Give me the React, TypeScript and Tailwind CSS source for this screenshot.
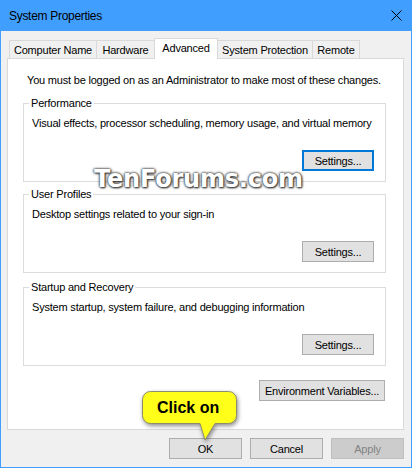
import React from "react";

function Btn({
  children,
  className = "",
}: {
  children: React.ReactNode;
  className?: string;
}) {
  return (
    <div
      className={
        "flex items-center justify-center border border-[#adadad] bg-[#e1e1e1] text-black " +
        className
      }
    >
      {children}
    </div>
  );
}

function Group({
  label,
  text,
  focused = false,
  className = "",
}: {
  label: string;
  text: string;
  focused?: boolean;
  className?: string;
}) {
  return (
    <div
      className={
        "relative ml-[15px] flex h-[79px] w-[363px] flex-col border border-[#dcdcdc] pl-[8px] pr-[11px] pt-[11px] " +
        className
      }
    >
      <div className="absolute -top-[9px] left-[5px] bg-white px-[2px] leading-[16px]">
        {label}
      </div>
      <div className="leading-[16px]">{text}</div>
      <div className="mt-[19px] flex justify-end">
        {focused ? (
          <div className="flex h-[21px] w-[72px] items-center justify-center border-2 border-[#0078d7] bg-[#e1e1e1]">
            Settings...
          </div>
        ) : (
          <Btn className="h-[21px] w-[72px]">Settings...</Btn>
        )}
      </div>
    </div>
  );
}

export default function App() {
  const tabBase =
    "-ml-px flex items-center justify-center border-x border-t border-[#d9d9d9]";
  return (
    <div className="relative flex h-[468px] w-[412px] flex-col border-x border-b border-[#409eff] bg-[#f0f0f0] font-['Liberation_Sans',Arial,sans-serif] text-[11px] leading-[16px] tracking-[-0.2px] text-black">
      {/* Title bar */}
      <div className="flex h-[31px] shrink-0 items-center justify-between bg-[#409eff] pl-[8px] pr-[9px]">
        <span className="text-[12px] tracking-[-0.3px]">System Properties</span>
        <svg width="11" height="11" viewBox="0 0 11 11">
          <path d="M0.5 0.5 L10.5 10.5 M10.5 0.5 L0.5 10.5" stroke="#000" strokeWidth="1" />
        </svg>
      </div>

      {/* Body */}
      <div className="flex flex-1 flex-col pl-[6px] pr-[7px] pt-[7px]">
        {/* Tabs */}
        <div className="flex h-[20px] items-end pl-[3px]">
          <div className={tabBase + " h-[18px] w-[88px] bg-[#f0f0f0]"}>Computer Name</div>
          <div className={tabBase + " h-[18px] w-[59px] bg-[#f0f0f0]"}>Hardware</div>
          <div
            className={
              tabBase + " relative z-10 -mb-px h-[21px] w-[64px] bg-white pb-[2px]"
            }
          >
            Advanced
          </div>
          <div className={tabBase + " h-[18px] w-[96px] bg-[#f0f0f0]"}>System Protection</div>
          <div className={tabBase + " h-[18px] w-[48px] bg-[#f0f0f0]"}>Remote</div>
        </div>

        {/* Panel */}
        <div className="flex h-[372px] flex-col border border-[#d9d9d9] bg-white pt-[13px]">
          <div className="pl-[19px] leading-[16px]">
            You must be logged on as an Administrator to make most of these changes.
          </div>
          <Group
            className="mt-[15px]"
            label="Performance"
            text="Visual effects, processor scheduling, memory usage, and virtual memory"
            focused
          />
          <Group
            className="mt-[12px]"
            label="User Profiles"
            text="Desktop settings related to your sign-in"
          />
          <Group
            className="mt-[14px]"
            label="Startup and Recovery"
            text="System startup, system failure, and debugging information"
          />
          <div className="mr-[18px] mt-[14px] flex justify-end">
            <Btn className="h-[21px] w-[126px]">Environment Variables...</Btn>
          </div>
        </div>

        {/* Bottom buttons */}
        <div className="mt-[8px] flex justify-end gap-[8px]">
          <Btn className="h-[21px] w-[73px]">OK</Btn>
          <Btn className="h-[21px] w-[73px]">Cancel</Btn>
          <div className="flex h-[21px] w-[73px] items-center justify-center border border-[#bfbfbf] bg-[#cccccc] text-[#838383]">
            Apply
          </div>
        </div>
      </div>

      {/* Watermark */}
      <div className="pointer-events-none absolute left-[93px] top-[167px] whitespace-nowrap font-['DejaVu_Sans',Verdana,sans-serif] text-[24px] font-bold leading-[24px] tracking-[-0.2px] text-white [text-shadow:0_0_3px_#3a3a3a,0_0_2px_#3a3a3a,1px_1px_2px_#3a3a3a]">
        TenForums.com
      </div>

      {/* Callout */}
      <svg
        className="pointer-events-none absolute left-[137px] top-[387px] [filter:drop-shadow(1px_2px_2px_rgba(0,0,0,0.45))]"
        width="110"
        height="60"
        viewBox="0 0 110 60"
      >
        <path
          d="M12.5 4.5 H90.5 A8 8 0 0 1 98.5 12.5 V28.5 A8 8 0 0 1 90.5 36.5 H77 L67 53 L62 36.5 H12.5 A8 8 0 0 1 4.5 28.5 V12.5 A8 8 0 0 1 12.5 4.5 Z"
          fill="#ffff1a"
          stroke="#8c8c6e"
          strokeWidth="1"
        />
      </svg>
      <div className="pointer-events-none absolute left-[156px] top-[400px] whitespace-nowrap font-['Liberation_Sans',Arial,sans-serif] text-[16px] font-bold leading-[16px] tracking-normal text-black">
        Click on
      </div>
    </div>
  );
}
